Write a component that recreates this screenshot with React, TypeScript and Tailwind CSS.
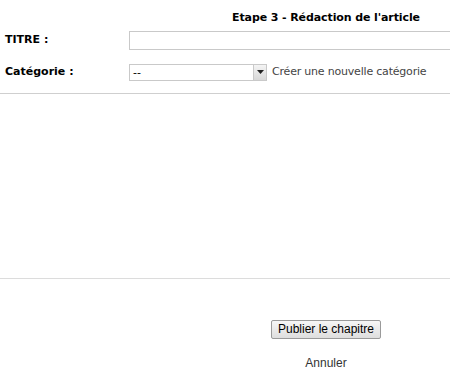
const App = () => {
  return (
    <div className="w-[450px] h-[388px] overflow-hidden bg-white">
      <div className="w-[523px] font-['DejaVu_Sans',Verdana,sans-serif] text-[11px] text-[#333]">
        {/* Step header */}
        <div className="flex pt-[10px]">
          <div className="w-[129px]" />
          <div className="w-[394px] text-center font-bold tracking-[-0.1px] text-black">Etape 3 - Rédaction de l'article</div>
        </div>

        {/* Title row */}
        <div className="flex items-center mt-[4px]">
          <label className="w-[129px] pl-[5px] font-bold text-black">TITRE :</label>
          <input type="text" className="w-[394px] h-[19px] border border-[#c9c9c9] bg-white outline-none" />
        </div>

        {/* Category row */}
        <div className="flex items-center mt-[14px]">
          <label className="w-[129px] pl-[5px] font-bold text-black">Catégorie :</label>
          <div className="flex h-[17px] w-[138px] items-stretch border border-[#c9c9c9] bg-white">
            <span className="flex-1 pl-[3px] leading-[15px] text-black">--</span>
            <span className="flex w-[13px] items-center justify-center border-l border-[#c9c9c9] bg-gradient-to-b from-[#f4f4f4] to-[#d8d8d8]">
              <svg width="7" height="4" viewBox="0 0 7 4">
                <path d="M0 0h7L3.5 4z" fill="#222" />
              </svg>
            </span>
          </div>
          <span className="ml-[5px] tracking-[-0.2px] text-[#444]">Créer une nouvelle catégorie</span>
        </div>

        <hr className="mt-[12px] w-[450px] border-t border-[#cfcfcf]" />

        {/* Editor area */}
        <div className="h-[184px]" />

        <hr className="w-[450px] border-t border-[#dcdcdc]" />

        {/* Actions */}
        <div className="flex">
          <div className="w-[129px]" />
          <div className="flex w-[394px] flex-col items-center pt-[41px] font-['Liberation_Sans',Arial,sans-serif] text-[12px]">
            <button className="h-[19px] rounded-[2px] border border-[#9a9a9a] bg-gradient-to-b from-[#f6f6f6] to-[#dedede] px-[6px] leading-[17px] text-black">
              Publier le chapitre
            </button>
            <a className="mt-[15px] text-[#333]">Annuler</a>
          </div>
        </div>
      </div>
    </div>
  );
};

export default App;
